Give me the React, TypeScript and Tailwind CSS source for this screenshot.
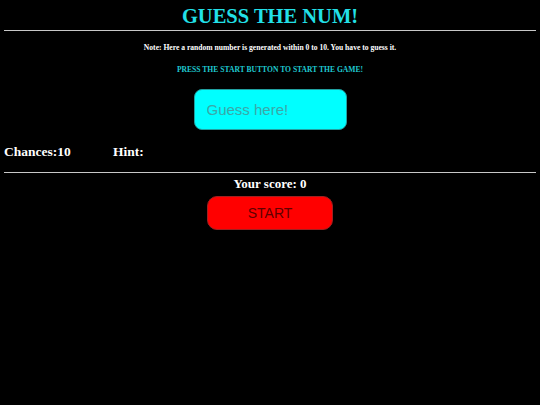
export default function App() {
  return (
    <div className="min-h-[405px] w-full bg-black px-1 font-['Liberation_Serif',serif] text-white">
      <h1 className="pt-[4px] text-center text-[20.5px] font-bold leading-[25px] text-[#22e0e8]">GUESS THE NUM!</h1>
      <div className="mt-[1px] h-px bg-[#c8c8c8]" />
      <p className="mt-[12px] text-center text-[7.6px] font-bold leading-[10px]">
        Note: Here a random number is generated within 0 to 10. You have to guess it.
      </p>
      <p className="mt-[12px] text-center text-[7.6px] font-bold leading-[10px] text-[#1fc8d0]">
        PRESS THE START BUTTON TO START THE GAME!
      </p>
      <div className="mt-[14px] flex justify-center">
        <input
          placeholder="Guess here!"
          className="h-[41px] w-[153px] rounded-[8px] border border-[#20a0a0] bg-[#00ffff] px-[12px] font-['Liberation_Sans',sans-serif] text-[15px] text-black outline-none placeholder:text-[#3aa8a8]"
        />
      </div>
      <div className="mt-[13px] flex text-[13.5px] font-bold leading-[18px]">
        <span className="w-[109px]">Chances:10</span>
        <span>Hint:</span>
      </div>
      <div className="mt-[11px] h-px bg-[#c8c8c8]" />
      <p className="mt-[3px] text-center text-[13px] font-bold leading-[16px]">Your score: 0</p>
      <div className="mt-[4px] flex justify-center">
        <button className="h-[34px] w-[126px] rounded-[10px] border border-[#a02020] bg-[#ff0000] font-['Liberation_Sans',sans-serif] text-[14px] text-[#600000]">
          START
        </button>
      </div>
    </div>
  );
}
